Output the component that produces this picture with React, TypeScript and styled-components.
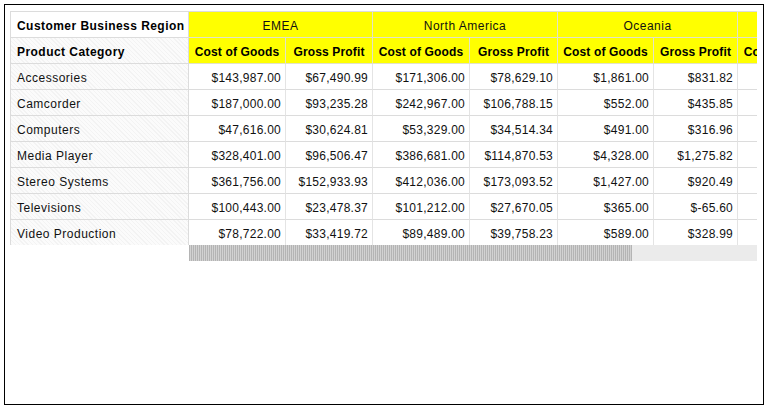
import React from "react";
import styled, { createGlobalStyle } from "styled-components";

const Global = createGlobalStyle`
  html, body { margin: 0; padding: 0; background: #fff; }
  body { font-family: "Liberation Sans", Arial, sans-serif; font-size: 12px; color: #000; }
`;

const Frame = styled.div`
  box-sizing: border-box;
  margin: 4px 0 0 4px;
  width: 760px;
  height: 401px;
  border: 1px solid #000;
  padding: 6px 0 0 5px;
`;

const Report = styled.div`
  display: flex;
  align-items: flex-start;
`;

const FrozenPane = styled.div`
  display: grid;
  grid-template-columns: 177px;
  border-left: 1px solid #dcdcdc;
  border-top: 1px solid #dcdcdc;
  border-right: 1px solid #dcdcdc;
`;

const ScrollPane = styled.div`
  width: 568px;
  display: flex;
  flex-direction: column;
`;

const Viewport = styled.div`
  width: 568px;
  overflow: hidden;
  border-top: 1px solid #dcdcdc;
`;

const DataGrid = styled.div`
  display: grid;
  grid-template-columns: 97px 87px 97px 88px 96px 84px 97px 87px;
  width: max-content;
`;

type Kind = "label" | "number" | "head" | "group";

const Cell = styled.div<{
  $bg?: "white" | "pattern" | "yellow";
  $kind?: Kind;
  $span?: number;
  $last?: boolean;
}>`
  box-sizing: border-box;
  height: ${(p) => (p.$last ? "25px" : "26px")};
  display: flex;
  align-items: center;
  justify-content: ${(p) =>
    p.$kind === "number" ? "flex-end" : p.$bg === "yellow" ? "center" : "flex-start"};
  padding: ${(p) =>
    p.$kind === "number" ? "2px 4px 0 0" : p.$bg === "yellow" ? "2px 2px 0" : "2px 0 0 6px"};
  border-bottom: ${(p) =>
    p.$last ? "none" : `1px solid ${p.$bg === "yellow" ? "#e2e2c8" : "#dcdcdc"}`};
  border-right: 1px solid ${(p) => (p.$bg === "yellow" ? "#e2e2c8" : "#e4e4e4")};
  font-weight: ${(p) => (p.$kind === "head" ? 700 : 400)};
  letter-spacing: ${(p) =>
    p.$kind === "number"
      ? "0.25px"
      : p.$kind === "head"
      ? p.$bg === "yellow"
        ? "0.15px"
        : "0.45px"
      : "0.5px"};
  color: ${(p) => (p.$kind === "head" ? "#000" : "#111")};
  white-space: nowrap;
  overflow: hidden;
  grid-column: span ${(p) => p.$span ?? 1};
  background: ${(p) =>
    p.$bg === "yellow"
      ? "#ffff00"
      : p.$bg === "pattern"
      ? "repeating-linear-gradient(45deg, #f3f3f3 0 1px, #fbfbfb 1px 3px)"
      : "#fff"};
`;

const FrozenCell = styled(Cell)`
  border-right: none;
`;

const Scrollbar = styled.div`
  height: 16px;
  width: 568px;
  background: #ebebeb;
  display: flex;
`;

const Thumb = styled.div`
  width: 443px;
  height: 100%;
  background: repeating-linear-gradient(90deg, #b4b4b4 0 1px, #d2d2d2 1px 2px);
`;

const regions = ["EMEA", "North America", "Oceania", ""];

const rows: [string, string[]][] = [
  ["Accessories", ["$143,987.00", "$67,490.99", "$171,306.00", "$78,629.10", "$1,861.00", "$831.82", "", ""]],
  ["Camcorder", ["$187,000.00", "$93,235.28", "$242,967.00", "$106,788.15", "$552.00", "$435.85", "", ""]],
  ["Computers", ["$47,616.00", "$30,624.81", "$53,329.00", "$34,514.34", "$491.00", "$316.96", "", ""]],
  ["Media Player", ["$328,401.00", "$96,506.47", "$386,681.00", "$114,870.53", "$4,328.00", "$1,275.82", "", ""]],
  ["Stereo Systems", ["$361,756.00", "$152,933.93", "$412,036.00", "$173,093.52", "$1,427.00", "$920.49", "", ""]],
  ["Televisions", ["$100,443.00", "$23,478.37", "$101,212.00", "$27,670.05", "$365.00", "$-65.60", "", ""]],
  ["Video Production", ["$78,722.00", "$33,419.72", "$89,489.00", "$39,758.23", "$589.00", "$328.99", "", ""]],
];

export default function App() {
  return (
    <>
      <Global />
      <Frame>
        <Report>
          <FrozenPane>
            <FrozenCell $kind="head">Customer Business Region</FrozenCell>
            <FrozenCell $kind="head" $bg="pattern">Product Category</FrozenCell>
            {rows.map(([name], i) => (
              <FrozenCell key={name} $kind="label" $bg="pattern" $last={i === rows.length - 1}>
                {name}
              </FrozenCell>
            ))}
          </FrozenPane>
          <ScrollPane>
            <Viewport>
              <DataGrid>
                {regions.map((r, i) => (
                  <Cell key={"r" + i} $bg="yellow" $kind="group" $span={2}>{r}</Cell>
                ))}
                {regions.map((_, i) => (
                  <React.Fragment key={"h" + i}>
                    <Cell $bg="yellow" $kind="head">Cost of Goods</Cell>
                    <Cell $bg="yellow" $kind="head">Gross Profit</Cell>
                  </React.Fragment>
                ))}
                {rows.map(([name, vals], i) =>
                  vals.map((v, j) => (
                    <Cell key={name + j} $kind="number" $last={i === rows.length - 1}>{v}</Cell>
                  ))
                )}
              </DataGrid>
            </Viewport>
            <Scrollbar>
              <Thumb />
            </Scrollbar>
          </ScrollPane>
        </Report>
      </Frame>
    </>
  );
}
